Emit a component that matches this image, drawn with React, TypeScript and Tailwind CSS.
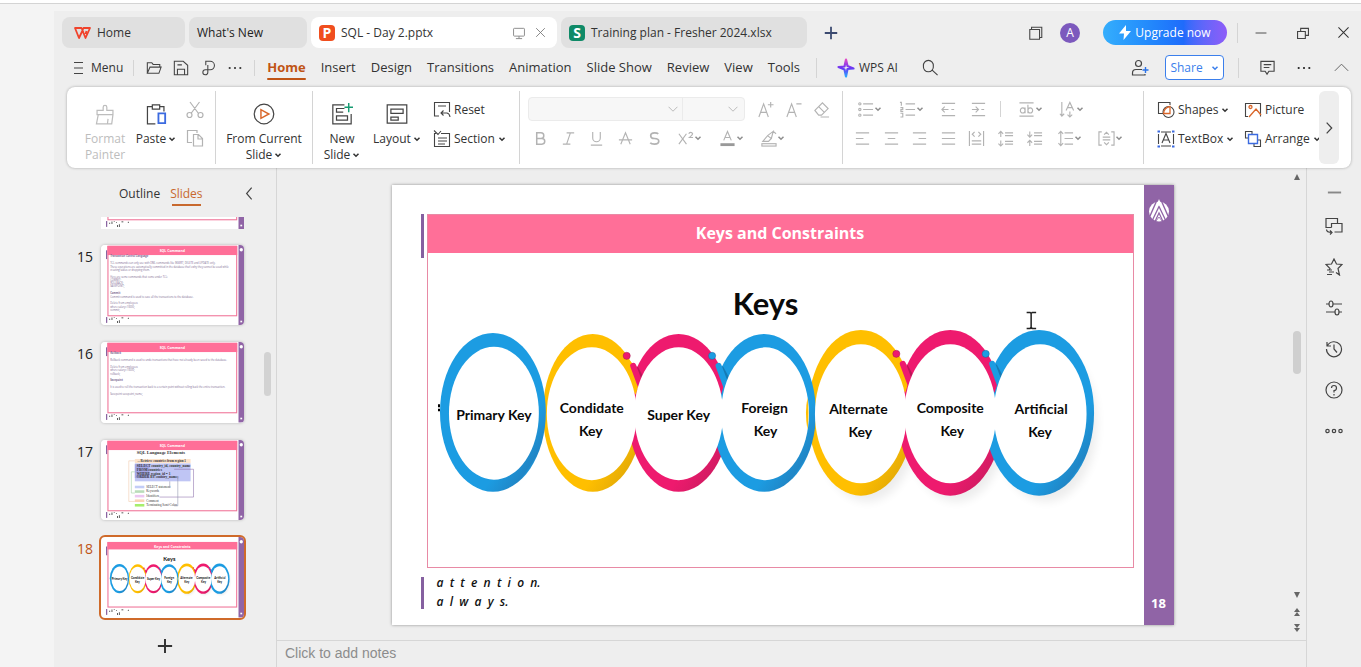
import React from "react";

type P = { children?: React.ReactNode; className?: string };

/* ---------- icon helpers ---------- */

function Icon({ s = 18, c = "#444", w = 1.2, children }: { s?: number; c?: string; w?: number; children: React.ReactNode }) {
  return (
    <svg width={s} height={s} viewBox="0 0 18 18" fill="none" stroke={c} strokeWidth={w} className="shrink-0" aria-hidden="true">
      {children}
    </svg>
  );
}

function Chev({ c = "#333" }: { c?: string }) {
  return (
    <svg width="8" height="8" viewBox="0 0 8 8" fill="none" stroke={c} strokeWidth="1.5" className="shrink-0" aria-hidden="true">
      <path d="M1.5 2.7 4 5.2 6.5 2.7" />
    </svg>
  );
}

function Btn({ label, className = "", children }: P & { label: string }) {
  return (
    <button aria-label={label} className={`flex shrink-0 items-center justify-center ${className}`}>
      {children}
    </button>
  );
}

const G = "#b3b3b3";

function Tool({ label, menu, children, className = "w-7" }: P & { label: string; menu?: boolean }) {
  return (
    <Btn label={label} className={`h-6 ${className}`}>
      <Icon c={G} s={17}>{children}</Icon>
      {menu && <Chev c="#8f8f8f" />}
    </Btn>
  );
}

function Divider({ className = "h-5" }: P) {
  return <span className={`w-px shrink-0 bg-[#d4d4d4] ${className}`} />;
}

/* ---------- slide drawing ---------- */

const BLUE = "#1c9ce2";
const YELLOW = "#ffbf00";
const PINK = "#ee1a6e";

const rings = [
  { cx: 493, rx: 53, ry: 79.5, ix: 494, irx: 45, iry: 66.5, cy: 412.5, c: "url(#ringBlue)" },
  { cx: 593, rx: 50, ry: 79, ix: 592, irx: 45, iry: 66.5, cy: 413, c: "url(#ringYellow)" },
  { cx: 679, rx: 51, ry: 79, ix: 679, irx: 44.5, iry: 66.5, cy: 413, c: "url(#ringPink)" },
  { cx: 764.5, rx: 52, ry: 79, ix: 765.5, irx: 44, iry: 66.5, cy: 413, c: "url(#ringBlue)" },
  { cx: 861.5, rx: 53, ry: 83, ix: 861.5, irx: 46, iry: 69.5, cy: 413, c: "url(#ringYellow)" },
  { cx: 951, rx: 53, ry: 83, ix: 951, irx: 46, iry: 69.5, cy: 413, c: "url(#ringPink)" },
  { cx: 1040, rx: 55, ry: 83, ix: 1041, irx: 46.5, iry: 69.5, cy: 413, c: "url(#ringBlue)" },
];

const joints = [
  { x: 636, y: 0, from: YELLOW, to: PINK, dark: "#8e1244" },
  { x: 721.5, y: 0, from: PINK, to: BLUE, dark: "#0f5c8a" },
  { x: 906, y: -2, from: YELLOW, to: PINK, dark: "#8e1244" },
  { x: 995.5, y: -2, from: PINK, to: BLUE, dark: "#0f5c8a" },
];

const names: [string, number, number][] = [
  ["Primary Key", 494, 420],
  ["Condidate", 592, 413],
  ["Key", 591, 436],
  ["Super Key", 679, 420],
  ["Foreign", 765, 413],
  ["Key", 766, 436],
  ["Alternate", 859, 414],
  ["Key", 861, 437],
  ["Composite", 951, 413],
  ["Key", 953, 436],
  ["Artificial", 1042, 414],
  ["Key", 1041, 437],
];

function Rings({ labelSize = 14 }: { labelSize?: number }) {
  return (
    <g>
      <defs>
        <linearGradient id="ringBlue" x1="0" y1="0" x2="1" y2="1">
          <stop offset="0.7" stopColor="#1c9ce2" />
          <stop offset="0.84" stopColor="#2086c6" />
          <stop offset="0.86" stopColor="#1c9ce2" />
        </linearGradient>
        <linearGradient id="ringYellow" x1="0" y1="0" x2="1" y2="1">
          <stop offset="0.7" stopColor="#ffbf00" />
          <stop offset="0.86" stopColor="#e6ac06" />
        </linearGradient>
        <linearGradient id="ringPink" x1="0" y1="0" x2="1" y2="1">
          <stop offset="0.7" stopColor="#ee1a6e" />
          <stop offset="0.86" stopColor="#d21b62" />
        </linearGradient>
        <filter id="soft" x="-20%" y="-20%" width="140%" height="140%">
          <feGaussianBlur stdDeviation="5" />
        </filter>
      </defs>
      <g fill="#000" opacity="0.07" filter="url(#soft)">
        <ellipse cx="868" cy="424" rx="50" ry="78" />
        <ellipse cx="957" cy="424" rx="50" ry="78" />
        <ellipse cx="1047" cy="424" rx="51" ry="78" />
      </g>
      {[1, 2, 4, 5, 6, 0, 3].map((i) => {
        const r = rings[i];
        return <ellipse key={i} cx={r.cx} cy={r.cy} rx={r.rx} ry={r.ry} fill={r.c} />;
      })}
      {joints.map((j) => (
        <g key={j.x} transform={`translate(${j.x} ${j.y})`}>
          <path d="M-14 352 L-4 363 L3 385 L0 395 L-10 380Z" fill={j.from} />
          <path d="M1 368 L7 379" stroke={j.dark} strokeWidth="3" strokeLinecap="round" opacity="0.5" />
          <path d="M-2.5 366 L6 389" stroke={j.to} strokeWidth="6" strokeLinecap="round" />
        </g>
      ))}
      {rings.map((r) => (
        <ellipse key={r.cx} cx={r.ix} cy={r.cy + 1} rx={r.irx} ry={r.iry} fill="#fff" />
      ))}
      <path d="M808 398 Q805 413 808 430 Q810 413 808 398Z" fill={YELLOW} />
      {joints.map((j) => (
        <circle key={j.x} cx={j.x - 9} cy={356 + j.y} r="3.6" fill={j.to} stroke={j.dark} strokeWidth="0.4" />
      ))}
      <g fill="#0a0a0a" textAnchor="middle" fontWeight="700" fontFamily="Lato, 'Open Sans', sans-serif">
        <text x="766" y="315" fontSize="31">Keys</text>
        {names.map(([t, x, y]) => (
          <text key={x + t} x={x} y={y} fontSize={labelSize}>{t}</text>
        ))}
      </g>
    </g>
  );
}

function Crest() {
  return (
    <svg width="20" height="23" viewBox="0 0 20 23" aria-hidden="true">
      <circle cx="10" cy="12.5" r="10" fill="#fff" />
      <g stroke="#9064a6" fill="none">
        <path d="M8 1 L1 17 M12 1 L19 17" strokeWidth="1.4" />
        <path d="M3.5 21 L10 7.5 L16.5 21" strokeWidth="1.3" />
        <path d="M6 22.500 L10 14 L14 22.500" strokeWidth="1.2" />
        <path d="M7 22 L10 18 L13 22" strokeWidth="0.8" />
      </g>
      <path d="M10 0 L12 5 L10 7 L8 5Z" fill="#fff" />
    </svg>
  );
}

/* ---------- thumbnails ---------- */

function Thumb({ title, top = 5, children }: P & { title?: string; top?: number }) {
  return (
    <svg viewBox="0 0 782 440" className="block h-auto w-full bg-white" aria-hidden="true">
      <rect x="752" y="0" width="30" height="440" fill="#9064a6" />
      <circle cx="767" cy="26" r="9" fill="#fff" />
      <rect x="762" y="414" width="10" height="9" fill="#fff" />
      <rect x="28" y={top + 24} width="6" height="48" fill="#7a4f95" />
      <rect x="28" y="394" width="6" height="32" fill="#7a4f95" />
      <rect x="38" y={top + 2} width="704" height={top > 20 ? 353 : 380} fill="none" stroke="#f0779a" strokeWidth="6" />
      <rect x="35" y={top} width="710" height={top > 20 ? 40 : 50} fill="#ff6f98" />
      {title && (
        <text x="390" y={top + 31} textAnchor="middle" fontSize="19" fontWeight="700" fill="#fff" fontFamily="Open Sans, sans-serif">{title}</text>
      )}
      {children}
      <path fill="#222" d="M45 404h5v5h-5z M58 396h4v14h-4z M70 394h4v4h-4z M82 400h4v5h-4z M88 416h4v10h-4z M98 412h4v14h-4z M112 396h10v5h-10z M147 398h4v7h-4z" />
    </svg>
  );
}

function Lines({ rows }: { rows: [number, string, boolean?][] }) {
  return (
    <g fill="#7d6a92" fontFamily="Open Sans, sans-serif" fontSize="14">
      {rows.map(([y, t, b]) => (
        <text key={y} x="50" y={y} fontWeight={b ? 700 : 400}>{t}</text>
      ))}
    </g>
  );
}

function ElementsChart() {
  const code = ["SELECT country_id, country_name", "FROM countries", "WHERE region_id = 1", "ORDER BY country_name;"];
  const keys: [string, string][] = [
    ["#c3cdf7", "SELECT statement"],
    ["#b9dcb9", "Keywords"],
    ["#ecc7f2", "Identifiers"],
    ["#fbd3b4", "Comment"],
    ["#a6ee6c", "Terminating Semi-Colon"],
  ];
  return (
    <g fontFamily="Liberation Serif, serif" fill="#333">
      <text x="195" y="78" fontSize="25" fontWeight="700">SQL Language Elements</text>
      <rect x="185" y="104" width="305" height="22" fill="#fde3cc" />
      <text x="200" y="121" fontSize="18" fontWeight="700">-- Retrieve countries from region 1</text>
      <rect x="185" y="128" width="305" height="98" fill="#bfc5f4" />
      <rect x="185" y="132" width="80" height="76" fill="#a3a6e6" />
      <g fontSize="19" fontWeight="700">
        {code.map((t, i) => (
          <text key={t} x="196" y={147 + i * 21}>{t}</text>
        ))}
      </g>
      <g fontSize="17">
        {keys.map(([c, t], i) => (
          <g key={t}>
            <rect x="185" y={250 + i * 25} width="52" height="14" fill={c} />
            <text x="248" y={262 + i * 25}>{t}</text>
          </g>
        ))}
      </g>
      <g fill="none" strokeWidth="3">
        <path d="M185 114H152V336H185" stroke="#eec6a6" />
        <path d="M185 174H166V290H185" stroke="#9ccb9c" />
        <path d="M400 160H506V312H320" stroke="#8a6aa8" />
        <path d="M420 200V360H400M376 226V262" stroke="#8a8fa8" />
      </g>
    </g>
  );
}

/* ---------- window ---------- */

function TitleBar() {
  return (
    <div className="flex items-center pt-1.5 pr-[11px] pl-2">
      <nav aria-label="Documents" className="flex gap-1">
        <button className="flex h-[31px] w-[123px] items-center gap-1.5 rounded-lg bg-[#e0e0e0] pl-3 text-[#333]">
          <svg width="17" height="12" viewBox="0 0 17 12" fill="none" stroke="#f0432c" strokeWidth="1.8" strokeLinejoin="round" aria-hidden="true">
            <path d="M7.500 5.500 9.500 1H16L11.500 11 8.500 3.500 5 11 1 1H7.500L9.500 5.500M12.500 4 11.500 7" />
          </svg>
          Home
        </button>
        <button className="flex h-[31px] w-[118px] items-center rounded-lg bg-[#e0e0e0] pl-2 text-[#222]">What's New</button>
        <div className="flex h-[31px] w-[246px] items-center rounded-lg bg-white pl-2">
          <button className="flex items-center gap-1.5 text-[#333]">
            <span className="grid size-4 place-items-center rounded-sm bg-[#f04e1e] text-sm leading-4 font-bold text-white">P</span>
            SQL - Day 2.pptx
          </button>
          <Btn label="Present" className="ml-auto">
            <Icon s={14} c="#888"><path d="M3 3H15Q16 3 16 4V12Q16 13 15 13H3Q2 13 2 12V4Q2 3 3 3ZM9 13V16M5 16.200H13" /></Icon>
          </Btn>
          <Btn label="Close tab" className="mr-2.5 ml-2">
            <Icon s={13} c="#777"><path d="M3 3 15 15M15 3 3 15" /></Icon>
          </Btn>
        </div>
        <button className="flex h-[31px] w-[246px] items-center gap-1.5 rounded-lg bg-[#e0e0e0] pl-2 text-[#333]">
          <span className="grid size-4 place-items-center rounded-sm bg-[#0f8a67] text-sm leading-4 font-bold text-white">S</span>
          Training plan - Fresher 2024.xlsx
        </button>
      </nav>
      <Btn label="New tab" className="ml-4">
        <Icon s={16} c="#3b4a70" w={2}><path d="M9 2V16M2 9H16" /></Icon>
      </Btn>
      <div className="ml-auto flex items-center">
        <Btn label="Windows">
          <Icon s={16}><path d="M2 5H13V16H2ZM4 5V2.500H15.500V14H13" /></Icon>
        </Btn>
        <Btn label="Account" className="ml-4 size-5 rounded-full bg-[#7c59bd] text-xs text-white">A</Btn>
        <button className="ml-[23px] flex h-[25px] w-[124px] items-center justify-center gap-1 rounded-full bg-linear-to-r from-[#35aefc] via-[#1f6bfb] via-65% to-[#8e5cf8] text-white">
          <svg width="12" height="15" viewBox="0 0 12 15" fill="#fff" aria-hidden="true"><path d="M7 0 0 8.500H5L4.500 15 12 6H7Z" /></svg>
          Upgrade now
        </button>
        <Divider className="ml-2.5 h-5" />
        <Btn label="Minimize" className="ml-4"><Icon s={14}><path d="M2 9H16" /></Icon></Btn>
        <Btn label="Restore" className="ml-7"><Icon s={14} w={1.4}><path d="M2 7H12V16H2ZM6 7V3H16V12H12" /></Icon></Btn>
        <Btn label="Close" className="ml-[27px]"><Icon s={13} c="#333" w={1.4}><path d="M2 2 16 16M16 2 2 16" /></Icon></Btn>
      </div>
    </div>
  );
}

function MenuBar() {
  const tabs = ["Insert", "Design", "Transitions", "Animation", "Slide Show", "Review", "View", "Tools"];
  return (
    <div className="flex h-[39px] items-center pr-3 pl-5">
      <button className="flex items-center gap-2 text-[#333]">
        <svg width="9" height="12" viewBox="0 0 9 12" stroke="#444" aria-hidden="true"><path d="M0 .5H9M0 6H9M0 11.500H9" /></svg>
        Menu
      </button>
      <Divider className="ml-2.5 h-4" />
      <div className="ml-1.5 flex">
        <Btn label="Open" className="w-[27px]">
          <Icon s={16}><path d="M1.500 15V3H6.500L8 5H15.500V8M1.500 15 4.500 8H17L14.500 15Z" /></Icon>
        </Btn>
        <Btn label="Save" className="w-[27px]">
          <Icon s={16}><path d="M1.500 1.500H11.500L16.500 6V16.500H1.500ZM5 16V10.500H13V16M5 5.500H10" /></Icon>
        </Btn>
        <Btn label="Print" className="w-[27px]">
          <Icon s={16}><path d="M6.500 6V1.500H11.500A4.700 4.700 0 0 1 11.500 11H6A2.800 2.800 0 1 0 8.800 14V5.500" /></Icon>
        </Btn>
        <Btn label="More quick access" className="w-[27px]">
          <Icon s={16}><path d="M2 9H4M8 9H10M14 9H16" strokeWidth="2" /></Icon>
        </Btn>
      </div>
      <Divider className="ml-1.5 h-4" />
      <nav aria-label="Ribbon tabs" className="ml-3 flex items-center gap-[15px] text-[13px] text-[#333]">
        <button className="relative font-bold text-[#c05415]">
          Home
          <span className="absolute inset-x-0 -bottom-1 h-0.5 rounded-full bg-[#c05415]" />
        </button>
        {tabs.map((t) => (
          <button key={t} className="whitespace-nowrap">{t}</button>
        ))}
      </nav>
      <Divider className="ml-4 h-5" />
      <button className="ml-5 flex items-center gap-1 whitespace-nowrap text-[#333]">
        <svg width="18" height="20" viewBox="0 0 18 20" fill="none" strokeWidth="2.200" aria-hidden="true">
          <defs>
            <linearGradient id="ai" x1="0" y1="0" x2="0" y2="1">
              <stop offset="0" stopColor="#e04cc8" />
              <stop offset="0.5" stopColor="#6a35f5" />
              <stop offset="1" stopColor="#2aa5ff" />
            </linearGradient>
          </defs>
          <path d="M9 1.500 10.500 8 16.500 10.500 10.500 11 9 18.500 7.500 11.500 1.500 9 7.500 8.500Z" stroke="url(#ai)" strokeLinejoin="round" />
        </svg>
        WPS AI
      </button>
      <Btn label="Search" className="ml-6">
        <Icon s={17}><path d="M12 7.500A5.300 5.300 0 1 1 1.500 7.500 5.300 5.300 0 1 1 12 7.500ZM10.500 11.500 16.500 17" /></Icon>
      </Btn>
      <div className="ml-auto flex items-center">
        <Btn label="Add people">
          <Icon s={18}><path d="M10.500 4.500A3 3 0 1 1 4.500 4.500 3 3 0 1 1 10.500 4.500ZM11 10.500H5Q1.500 10.500 1.500 14V16H14V15" /><path d="M14.500 8V14M11.500 11H17.500" stroke="#2a72e8" strokeWidth="1.400" /></Icon>
        </Btn>
        <button className="ml-4 flex h-[25px] w-[59px] items-center justify-center gap-2 rounded-sm border border-[#3b7fec] bg-white text-[#3b7fec]">
          Share <Chev c="#3b7fec" />
        </button>
        <Divider className="ml-3.5 h-5" />
        <Btn label="Comments" className="ml-5">
          <Icon s={17}><path d="M2 2.500H16V13H10.500L8.500 16 6.500 13H2ZM5 6H13M5 9H11" /></Icon>
        </Btn>
        <Btn label="More options" className="ml-5">
          <Icon s={16} c="#333"><path d="M2 9H4M8 9H10M14 9H16" strokeWidth="2.200" /></Icon>
        </Btn>
        <Btn label="Collapse ribbon" className="ml-[22px]">
          <Icon s={15} c="#666"><path d="M1 13 9 5 17 13" /></Icon>
        </Btn>
      </div>
    </div>
  );
}

function BigButton({ icon, lines, menu, muted, className = "" }: { icon: React.ReactNode; lines: string[]; menu?: boolean; muted?: boolean; className?: string }) {
  return (
    <button className={`flex shrink-0 flex-col items-center pt-4 leading-4 ${muted ? "text-[#bdbdbd]" : "text-[#333]"} ${className}`}>
      {icon}
      {lines.map((l, i) => (
        <span key={l} className={`flex items-center gap-0.5 whitespace-nowrap ${i === 0 ? "mt-1.5" : ""}`}>
          {l}
          {menu && i === lines.length - 1 && <Chev />}
        </span>
      ))}
    </button>
  );
}

function RowButton({ icon, label, menu, className = "" }: { icon: React.ReactNode; label: string; menu?: boolean; className?: string }) {
  return (
    <button className={`flex h-6 items-center gap-[3px] whitespace-nowrap text-[#333] ${className}`}>
      {icon}
      {label}
      {menu && <Chev />}
    </button>
  );
}

function Ribbon() {
  return (
    <div className="relative z-10 mr-2.5 ml-[13px] flex h-[81px] rounded-lg bg-white shadow-[0_0_3px_rgba(0,0,0,0.3)]">
      <div className="flex w-[148px] shrink-0">
        <BigButton
          muted
          className="ml-3 w-[52px]"
          lines={["Format", "Painter"]}
          icon={<Icon s={22} c="#bdbdbd" w={1}><path d="M7.500 6V3.500A1.500 1.500 0 0 1 10.500 3.500V6H15.500V9.500H2.500V6ZM3.500 9.500 2 17H14.500L15.500 9.500M11 17 11.500 13" /></Icon>}
        />
        <BigButton
          menu
          className="w-[50px]"
          lines={["Paste"]}
          icon={<Icon s={22} w={1}><path d="M6 3H2V17H8.500M12.500 3H15.500V7M6 1.500H12V5H6Z" /><path d="M11 8.500H16.500V16.500H11Z" stroke="#3c6be0" strokeWidth="1.500" /></Icon>}
        />
        <div className="ml-px flex flex-col pt-[9px]">
          <Btn label="Cut" className="h-7 w-[26px]">
            <Icon s={18} c={G}><path d="M4 1 12.500 12.500M13.500 1 5 12.500M6 14A2.500 2.500 0 1 1 1 14 2.500 2.500 0 1 1 6 14ZM17 14A2.500 2.500 0 1 1 12 14 2.500 2.500 0 1 1 17 14Z" /></Icon>
          </Btn>
          <Btn label="Copy" className="h-7 w-[26px]">
            <Icon s={18} c={G}><path d="M6 13.500H1.500V1.500H11V4M7.500 5.500H12.500L16.500 9.500V17H7.500ZM12 6V10H16.500" /></Icon>
          </Btn>
        </div>
      </div>
      <Divider className="mt-1 h-[73px]" />
      <div className="flex w-24 shrink-0 justify-center">
        <BigButton
          menu
          lines={["From Current", "Slide"]}
          icon={<Icon s={22} w={1}><circle cx="9" cy="9" r="8" /><path d="M6.500 5.500V12.500L13 9Z" stroke="#d9662a" strokeWidth="1.200" /></Icon>}
        />
      </div>
      <Divider className="mt-1 h-[73px]" />
      <div className="flex w-[206px] shrink-0">
        <BigButton
          menu
          className="w-[58px]"
          lines={["New", "Slide"]}
          icon={<Icon s={22} w={1}><path d="M11 1.500H1.500V17H16.500V9M11 4.500H4.500V7.500H10M4.500 10.500H13.500V14H4.500Z" /><path d="M14.500 0V7.500M11 3.500H18" stroke="#179b72" strokeWidth="1.200" /></Icon>}
        />
        <BigButton
          menu
          className="w-[52px]"
          lines={["Layout"]}
          icon={<Icon s={22} w={1}><path d="M1 1.500H17V16.500H1ZM4 5H14V8.500H4ZM4 11.500H10V14H4Z" /></Icon>}
        />
        <div className="ml-2.5 flex flex-col gap-[5px] pt-[11px]">
          <RowButton label="Reset" icon={<Icon s={18} w={1.1}><path d="M6 15H1.500V1.500H16.500V11M5 5H13M8 12H14Q16.500 12.500 17 16M10.500 9.500 8 12 10.500 14.500" /></Icon>} />
          <RowButton menu label="Section" icon={<Icon s={18} w={1.1}><path d="M3 3.500H1.500V16.500H16.500V3.500H8M1 .5 5 4.500 8 1M5 8H14M5 11H14M5 14H12" /></Icon>} />
        </div>
      </div>
      <Divider className="mt-1 h-[73px]" />
      <div className="flex w-[322px] shrink-0 flex-col gap-[5px] pt-[10px] pl-2">
        <div className="flex items-center">
          <div className="flex h-6 w-[217px] rounded-sm border border-[#ebebeb] bg-[#f7f7f7]">
            <button aria-label="Font" className="flex w-[154px] items-center justify-end border-r border-[#ebebeb] pr-1">
              <Icon s={10} c="#bbb" w={1.8}><path d="M1 5 9 13 17 5" /></Icon>
            </button>
            <button aria-label="Font size" className="flex flex-1 items-center justify-end pr-1.5">
              <Icon s={10} c="#bbb" w={1.8}><path d="M1 5 9 13 17 5" /></Icon>
            </button>
          </div>
          <div className="flex pl-1.5">
            <Tool label="Grow font"><path d="M2 17 7 3 12 17M4 12H10M14.500 1V7M11.500 4H17.500" /></Tool>
            <Tool label="Shrink font"><path d="M2 17 7 3 12 17M4 12H10M12 3H17.500" /></Tool>
            <Tool label="Clear formatting"><path d="M2 10 10 2 16 8 9 15H6ZM6 6 12 12M8 17H17" /></Tool>
          </div>
        </div>
        <div className="-ml-0.5 flex items-center">
          <Tool label="Bold"><path d="M5 3H9.500A3 3 0 0 1 9.500 9H5V3ZM5 9H10.500A3 3 0 0 1 10.500 15H5V9Z" strokeWidth="1.600" /></Tool>
          <Tool label="Italic"><path d="M7 3H15M3 15H11M11 3 7 15" /></Tool>
          <Tool label="Underline" className="w-[29px]"><path d="M5 2V8.500A4 4 0 0 0 13 8.500V2M3 16H15" /></Tool>
          <Tool label="Strikethrough" className="w-[29px]"><path d="M4 15 9 3 14 15M2 10.500H16" /></Tool>
          <Tool label="Shadow"><path d="M13 4Q12 3 9 3Q5 3 5 6T9 9Q13.500 9 13.500 12T9 15Q5.500 15 4.500 13.500" strokeWidth="1.800" /></Tool>
          <Tool label="Superscript" menu className="w-[43px]"><path d="M2 4 10 15M10 4 2 15M12.500 4Q13 2.500 14.500 2.500T16.500 4Q16.500 5 13 8H17" /></Tool>
          <Tool label="Font color" menu className="w-[41px]"><path d="M5 11 9 1.500 13 11M6.500 8H11.500" /><path d="M1.500 15.500H16.500" stroke="#999" strokeWidth="3" /></Tool>
          <Tool label="Highlight" menu className="w-[41px]"><path d="M3 12 8 6 12 9 9 12ZM8 6 14 1.500 12 9M14 1.500 17 4" /><rect x="2" y="14.500" width="15" height="2.500" /></Tool>
        </div>
      </div>
      <Divider className="mt-1 h-[73px]" />
      <div className="flex w-[300px] shrink-0 flex-col gap-[5px] pt-[10px] pl-[5px]">
        <div className="flex items-center">
          <Tool label="Bullets" menu className="w-[42px]"><path d="M6.500 3H17M6.500 9H17M6.500 15H17" /><circle cx="3" cy="3" r="1.200" /><circle cx="3" cy="9" r="1.200" /><circle cx="3" cy="15" r="1.200" /></Tool>
          <Tool label="Numbering" menu className="w-[42px]"><path d="M7 3H17M7 9H17M7 15H17M2.500 1V5M1 1.500H3M1.500 7H4V9H2V11H4.500M1.500 13H4V17H1.500" /></Tool>
          <Tool label="Decrease indent" className="w-8"><path d="M2 2.500H16M12 9H15M2 15.500H16M9 9H2M5 6 2 9 5 12" /></Tool>
          <Tool label="Increase indent" className="w-7"><path d="M2 2.500H16M12 9H15M2 15.500H16M2 9H9M6 6 9 9 6 12" /></Tool>
          <Divider className="mx-2 h-4" />
          <Tool label="Text fit" menu className="w-[42px]"><path d="M1.500 2H16.500M1.500 16H16.500M7.500 7V13M7.500 10A2.500 2.700 0 1 1 2.500 10 2.500 2.700 0 1 1 7.500 10ZM10.500 4V13M15.500 10A2.500 2.700 0 1 1 10.500 10 2.500 2.700 0 1 1 15.500 10Z" /></Tool>
          <Tool label="Text direction" menu className="w-[41px]"><path d="M3 1V16M1 13.500 3 16 5.500 13.500M7.500 10 11.500 1.500 15.500 10M9 7H14M11.500 11V17M9 14.500 11.500 17 14 14.500" /></Tool>
        </div>
        <div className="flex items-center">
          <Tool label="Align left" className="w-[29px]"><path d="M2 3H16M2 9H10M2 15H16" /></Tool>
          <Tool label="Align center"><path d="M2 3H16M5 9H13M2 15H16" /></Tool>
          <Tool label="Align right" className="w-[29px]"><path d="M2 3H16M8 9H16M2 15H16" /></Tool>
          <Tool label="Justify"><path d="M2 3H16M2 9H16M2 15H16" /></Tool>
          <Tool label="Distribute" className="w-[29px]"><path d="M1.500 1V17M16.500 1V17M4 11.500H14M4 15H14M7 2 4.500 4.500 7 7M11 2 13.500 4.500 11 7" /></Tool>
          <Tool label="Increase spacing" className="w-[29px]"><path d="M8.500 3H17M8.500 6H17M8.500 12H17M8.500 15H17M4 1.500V7.500M1.500 4 4 1.500 6.500 4M4 11V17M1.500 14.500 4 17 6.500 14.500" /></Tool>
          <Tool label="Decrease spacing"><path d="M8.500 3H17M8.500 6H17M8.500 12H17M8.500 15H17M4 1.500V7.500M1.500 5 4 7.500 6.500 5M4 11V17M1.500 13.500 4 11 6.500 13.500" /></Tool>
          <Tool label="Line spacing" menu className="w-[42px]"><path d="M8 3H17M8 9H17M8 15H17M4 1.500V16.500M1.500 4 4 1.500 6.500 4M1.500 14 4 16.500 6.500 14" /></Tool>
          <Tool label="Align text" menu className="w-10"><path d="M4 2H1V16H4M14 2H17V16H14M5 7.500H13M5 10.500H13M6.500 5 9 2.500 11.500 5M6.500 13 9 15.500 11.500 13" /></Tool>
        </div>
      </div>
      <Divider className="mt-1 h-[73px]" />
      <div className="grid min-w-0 flex-1 grid-cols-[87px_1fr] content-start gap-y-[5px] pt-[11px] pl-[13px]">
        <RowButton menu label="Shapes" icon={<Icon s={18} w={1.1}><path d="M6 12.500H1.500V1.500H13V4" /><circle cx="11.500" cy="11" r="5.500" /><path d="M13 5.500V12.500H6.500Q7 6.500 13 5.500Z" stroke="#d9662a" strokeWidth="1.300" /></Icon>} />
        <RowButton label="Picture" icon={<Icon s={18} w={1.1}><path d="M4 15.500H1.500V2.500H16.500V15.500" /><path d="M5 16 12 8 17 14M8 6A1.500 1.500 0 1 1 5 6 1.500 1.500 0 1 1 8 6Z" stroke="#d9662a" strokeWidth="1.300" /></Icon>} />
        <RowButton menu label="TextBox" icon={<Icon s={18} w={1.1}><path d="M1.500 4V14M16.500 4V14M5 13 9 3.500 13 13M6.500 10H11.500M4 16H14M4 2H14" /><path d="M.5 1.500H3M15 1.500H17.500M.5 16.500H3M15 16.500H17.500" stroke="#3c6be0" strokeWidth="2" /></Icon>} />
        <RowButton menu label="Arrange" icon={<Icon s={18} w={1.1}><path d="M4 8H1.500V1.500H8V4M10 14V16.500H16.500V10H14" /><path d="M4.500 4.500H13.500V13.500H4.500Z" stroke="#3c6be0" strokeWidth="1.400" /></Icon>} />
      </div>
      <Btn label="Scroll ribbon" className="mt-1 mr-3 h-[73px] w-5 rounded-md bg-[#eeeeee]">
        <Icon s={14} w={1.6}><path d="M6 2 12.500 9 6 16" /></Icon>
      </Btn>
    </div>
  );
}

function SlideRow({ n, active, children }: P & { n: number; active?: boolean }) {
  return (
    <li className="flex items-start">
      <span className={`w-[47px] pt-1 pl-[23px] text-sm leading-4 ${active ? "text-[#c05415]" : "text-[#222]"}`}>{n}</span>
      <button
        aria-label={`Slide ${n}`}
        className={`w-[143px] overflow-hidden rounded-sm ${active ? "outline-2 outline-[#cf6a2a]" : "shadow-[0_0_3px_rgba(0,0,0,0.25)]"}`}
      >
        {children}
      </button>
    </li>
  );
}

function SlidePanel() {
  return (
    <aside className="flex w-[222px] shrink-0 flex-col">
      <div className="flex h-[49px] items-center pt-0.5 pr-5 pl-[65px] text-xs">
        <button className="text-[#333]">Outline</button>
        <button className="relative ml-2.5 text-[#c8692e]">
          Slides
          <span className="absolute inset-x-0.5 -bottom-1 h-0.5 bg-[#c8692e]" />
        </button>
        <Btn label="Collapse panel" className="ml-auto">
          <Icon s={13} w={1.6}><path d="M12 1 5 9 12 17" /></Icon>
        </Btn>
      </div>
      <div className="flex flex-1">
        <div className="w-[210px]">
          <div className="ml-[47px] flex h-3 w-[143px] flex-col justify-end overflow-hidden">
            <div className="w-full shrink-0"><Thumb /></div>
          </div>
          <ol className="mt-4 flex flex-col gap-[17px]">
            <SlideRow n={15}>
              <Thumb title="SQL Command">
                <Lines
                  rows={[
                    [68, "Transaction Control Language", true],
                    [106, "TCL commands can only use with DML commands like INSERT, DELETE and UPDATE only."],
                    [124, "These operations are automatically committed in the database that's why they cannot be used while"],
                    [142, "creating tables or dropping them."],
                    [178, "Here are some commands that come under TCL:"],
                    [196, "COMMIT;"],
                    [214, "ROLLBACK;"],
                    [232, "SAVEPOINT;"],
                    [268, "Commit", true],
                    [288, "Commit command is used to save all the transactions to the database."],
                    [324, "Delete from employees"],
                    [344, "where salary=10000;"],
                    [362, "commit;"],
                  ]}
                />
              </Thumb>
            </SlideRow>
            <SlideRow n={16}>
              <Thumb title="SQL Command">
                <Lines
                  rows={[
                    [68, "Rollback", true],
                    [106, "Rollback command is used to undo transactions that have not already been saved to the database."],
                    [142, "Delete from employees"],
                    [160, "where salary=10000;"],
                    [178, "rollback;"],
                    [214, "Savepoint", true],
                    [252, "It is used to roll the transaction back to a certain point without rolling back the entire transaction."],
                    [288, "Savepoint savepoint_name;"],
                  ]}
                />
              </Thumb>
            </SlideRow>
            <SlideRow n={17}>
              <Thumb title="SQL Command"><ElementsChart /></Thumb>
            </SlideRow>
            <SlideRow n={18} active>
              <Thumb title="Keys and Constraints" top={28}>
                <g transform="translate(-392 -185)"><Rings labelSize={16} /></g>
              </Thumb>
            </SlideRow>
          </ol>
          <Btn label="New slide" className="mt-5 ml-[103px]">
            <Icon s={16} c="#333" w={2.2}><path d="M9 1V17M1 9H17" /></Icon>
          </Btn>
        </div>
        <span className="mt-[135px] h-11 w-[7px] rounded-full bg-[#d2d2d2]" />
      </div>
    </aside>
  );
}

function Slide() {
  return (
    <article className="mx-auto flex aspect-[782/440] w-[782px] max-w-full bg-white shadow-[0_0_3px_rgba(0,0,0,0.4)]">
      <div className="flex flex-1 flex-col pt-[29px] pl-[29px]">
        <div className="flex">
          <span className="mr-[3px] h-11 w-[3px] bg-[#8560a0]" />
          <section className="mr-2.5 flex-1 border border-[#e88aa5]">
            <h1 className="bg-[#ff6f98] pb-0.5 text-center text-base leading-9 font-bold text-white">Keys and Constraints</h1>
            <svg viewBox="428 253 706 314" className="block w-full" role="img" aria-label="Keys">
              <Rings />
              <path d="M439 404.500V407.500M439 409V411.500" stroke="#000" strokeWidth="2" />
              <path d="M1027.500 312.500H1031L1032 313.500 1033 312.500H1037M1027.500 328.500H1031L1032 327.500 1033 328.500H1037M1032 313.500V327.500" fill="none" stroke="#222" strokeWidth="1.500" />
            </svg>
          </section>
        </div>
        <div className="mt-[9px] flex">
          <span className="mr-[13px] h-8 w-[3px] bg-[#8560a0]" />
          <p className="-mt-1 text-xs leading-[19px] font-semibold whitespace-pre text-[#111] italic">
            {"a  t  t  e  n  t  i  o  n.\na  l  w  a  y  s."}
          </p>
        </div>
      </div>
      <div className="flex w-[30px] flex-col items-center justify-between bg-[#9064a6] pt-3.5 pb-3.5 text-[13px] leading-4 font-bold text-white">
        <Crest />
        18
      </div>
    </article>
  );
}

function Editor() {
  return (
    <main className="flex min-w-0 flex-1 flex-col border-x border-[#d6d6d6]">
      <div className="flex flex-1">
        <div className="flex-1 pt-[17px]"><Slide /></div>
        <div className="flex w-[18px] flex-col items-center pt-1.5 pb-2">
          <svg width="6" height="6" viewBox="0 0 6 6" fill="#666" aria-hidden="true"><path d="M3 0 6 6H0Z" /></svg>
          <span className="mt-[151px] h-[43px] w-2 rounded-full bg-[#cfcfcf]" />
          <svg width="6" height="6" viewBox="0 0 6 6" fill="#666" className="mt-auto" aria-hidden="true"><path d="M3 6 6 0H0Z" /></svg>
          <svg width="6" height="8" viewBox="0 0 6 8" fill="#666" className="mt-2.5" aria-hidden="true"><path d="M3 0 6 4H0ZM3 4 6 8H0Z" /></svg>
          <svg width="6" height="8" viewBox="0 0 6 8" fill="#666" className="mt-2" aria-hidden="true"><path d="M3 4 6 0H0ZM3 8 6 4H0Z" /></svg>
        </div>
      </div>
      <input
        aria-label="Notes"
        placeholder="Click to add notes"
        className="h-[27px] border-t border-[#d6d6d6] bg-transparent pb-0.5 pl-2 font-['Liberation_Sans',sans-serif] text-sm outline-none placeholder:text-[#8c8c8c]"
      />
    </main>
  );
}

function SideTools() {
  return (
    <aside className="flex w-[54px] shrink-0 flex-col items-center pt-1">
      <Btn label="Hide" className="h-10"><Icon s={17} c="#888" w={2}><path d="M2 9H16" /></Icon></Btn>
      <Btn label="Slide transition" className="h-[27px]">
        <Icon s={18}><path d="M6.500 10.500H1V1.500H12.500V6M8 6.500H17V15H9.500M6.500 10.500V6.500H8M1.500 12.500Q1.500 15.500 7 15.500M5 13.500 7 15.500 5 17.500" /></Icon>
      </Btn>
      <Btn label="Animation pane" className="mt-3.5 h-[27px]">
        <Icon s={18}><path d="M4 12 5 10.500 1 6.500 6.500 6 9 1 11.500 6 17 6.500 13 10.500 14.500 17 11 14.500M2 12H7M4 14H9M2 16.500H7" /></Icon>
      </Btn>
      <Btn label="Properties" className="mt-3.5 h-[27px]">
        <Icon s={18}><path d="M1 5H4M8 5H17M1 13H10M14 13H17" /><ellipse cx="6" cy="5" rx="2" ry="3" /><ellipse cx="12" cy="13" rx="2" ry="3" /></Icon>
      </Btn>
      <Btn label="History" className="mt-3.5 h-[27px]">
        <Icon s={18}><path d="M2.500 5.500A7.500 7.500 0 1 1 1.500 9M2 2V6H6M9 4.500V9L12 12.500" /></Icon>
      </Btn>
      <Btn label="Help" className="mt-3.5 h-[27px]">
        <Icon s={18}><circle cx="9" cy="9" r="8" /><path d="M6.500 7A2.500 2.500 0 1 1 9 9.500V11.500M9 13V14.500" /></Icon>
      </Btn>
      <Btn label="More tools" className="mt-3.5 h-[27px]">
        <Icon s={18}><circle cx="2.500" cy="9" r="1.700" /><circle cx="9" cy="9" r="1.700" /><circle cx="15.500" cy="9" r="1.700" /></Icon>
      </Btn>
    </aside>
  );
}

export default function App() {
  return (
    <div className="flex min-h-screen flex-col bg-[#f4f4f4] font-['Open_Sans','Noto_Sans',sans-serif] text-xs">
      <div className="h-1 border-b border-[#d4d4d4] bg-white" />
      <div className="mt-[7px] ml-[54px] flex flex-1 flex-col bg-[#eeeeee]">
        <TitleBar />
        <MenuBar />
        <Ribbon />
        <div className="flex flex-1">
          <SlidePanel />
          <Editor />
          <SideTools />
        </div>
      </div>
    </div>
  );
}
